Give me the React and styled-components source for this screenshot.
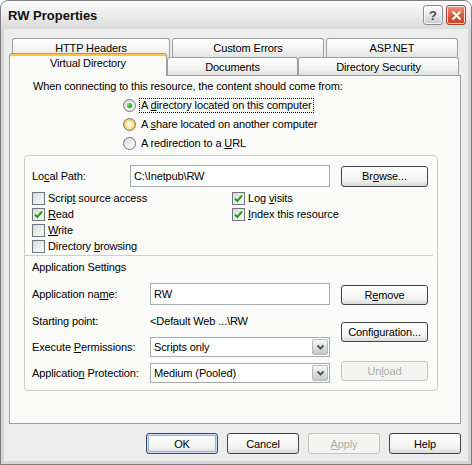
import React from 'react'
import styled, { createGlobalStyle, css } from 'styled-components'

const GlobalStyle = createGlobalStyle`
  html, body {
    margin: 0;
    padding: 0;
    background: #ffffff;
  }
  body {
    font-family: "Liberation Sans", Arial, sans-serif;
    font-size: 11px;
    letter-spacing: -0.12px;
    color: #000;
  }
  * { box-sizing: border-box; }
`

const Window = styled.div`
  width: 472px;
  height: 465px;
  border: 1px solid #7b7f84;
  border-radius: 8px 8px 0 0;
  background: #d6d6d6;
  display: flex;
  flex-direction: column;
  overflow: hidden;
`

const TitleBar = styled.div`
  height: 28px;
  flex-shrink: 0;
  display: flex;
  align-items: center;
  justify-content: space-between;
  padding: 0 5px 0 7px;
  background: linear-gradient(#fbfbfb, #eeeeee 45%, #dadada);
`

const Title = styled.div`
  font-family: "Liberation Sans", Arial, sans-serif;
  font-weight: bold;
  font-size: 13px;
  letter-spacing: 0;
  color: #111;
`

const CaptionButtons = styled.div`
  display: flex;
  gap: 3px;
`

const CaptionButton = styled.div`
  width: 20px;
  height: 20px;
  border-radius: 3px;
  display: flex;
  align-items: center;
  justify-content: center;
  border: 1px solid ${p => (p.$close ? '#a8452e' : '#8b8f96')};
  box-shadow: inset 0 0 0 1px rgba(255, 255, 255, 0.75);
  background: ${p =>
    p.$close
      ? 'linear-gradient(#ee9a84, #dc5a3c 50%, #c8401f)'
      : 'linear-gradient(#ffffff, #e4e4e6 55%, #c9cbd0)'};
  color: #4a4f57;
  font-weight: bold;
  font-size: 13px;
`

const Body = styled.div`
  flex: 1;
  margin: 0 3px 3px;
  background: #ededed;
  display: flex;
  flex-direction: column;
  padding: 9px 7px 7px 5px;
`

const TabStrip = styled.div`
  display: flex;
  flex-direction: column;
`

const TabRow = styled.div`
  display: flex;
  height: ${p => p.$h}px;
  gap: ${p => p.$gap}px;
  padding-left: ${p => p.$indent}px;
`

const Tab = styled.div`
  width: ${p => p.$w}px;
  border: 1px solid #9aa1a3;
  border-bottom: none;
  border-radius: 3px 3px 0 0;
  background: linear-gradient(#ffffff, #f4f4f3 55%, #e3e3e0);
  display: flex;
  align-items: center;
  justify-content: center;
  white-space: nowrap;
  ${p =>
    p.$active &&
    css`
      position: relative;
      z-index: 2;
      margin: -4px 0 -1px;
      border-top: 1px solid #e68b2c;
      box-shadow: inset 0 2px 0 #ffc83c;
      background: #fbfbf9;
      align-items: flex-start;
      padding-top: 3px;
    `}
`

const Panel = styled.div`
  flex: 1;
  border: 1px solid #9aa1a3;
  background: #fbfbf9;
  padding-top: 3px;
  display: flex;
  flex-direction: column;
`

const Intro = styled.div`
  padding-left: 23px;
  line-height: 14px;
`

const RadioList = styled.div`
  padding-left: 113px;
  margin-top: 3px;
  display: flex;
  flex-direction: column;
`

const RadioRow = styled.div`
  height: 19px;
  display: flex;
  align-items: center;
  gap: 2px;
`

const RadioCircle = styled.span`
  width: 13px;
  height: 13px;
  border-radius: 50%;
  border: 1px solid #6d7785;
  display: flex;
  align-items: center;
  justify-content: center;
  background: ${p =>
    p.$hover
      ? 'radial-gradient(circle, #fff6d4 25%, #fbd36a 60%, #f2b23a 100%)'
      : 'linear-gradient(135deg, #d8d8d2, #ffffff)'};
`

const RadioDot = styled.span`
  width: 5px;
  height: 5px;
  border-radius: 50%;
  background: radial-gradient(circle at 35% 35%, #7fe07f, #1d9a1d 70%);
`

const RadioLabel = styled.span`
  padding: 0 1px;
  line-height: 13px;
  border: 1px dotted ${p => (p.$focus ? '#000' : 'transparent')};
  margin-left: 1px;
`

const Group = styled.div`
  margin: 2px 0 0 14px;
  width: 414px;
  border: 1px solid #cfcfc8;
  border-radius: 4px;
  padding: 9px 8px 7px 7px;
  display: flex;
  flex-direction: column;
`

const PathRow = styled.div`
  display: flex;
  align-items: center;
`

const Label = styled.span`
  width: ${p => p.$w}px;
  flex-shrink: 0;
  white-space: nowrap;
`

const Field = styled.div`
  width: ${p => p.$w}px;
  height: ${p => p.$h}px;
  border: 1px solid #a4abb3;
  background: #ffffff;
  display: flex;
  align-items: center;
  padding-left: 3px;
  white-space: nowrap;
`

const DropButton = styled.span`
  margin-left: auto;
  margin-right: 1px;
  width: 16px;
  height: 16px;
  border: 1px solid #b8b8b8;
  border-radius: 2px;
  background: linear-gradient(#f8f8f8, #dcdcdc 60%, #c6c6c6);
  display: flex;
  align-items: center;
  justify-content: center;
`

const Button = styled.div`
  width: ${p => p.$w || 87}px;
  height: ${p => p.$h || 21}px;
  flex-shrink: 0;
  margin-left: ${p => p.$ml || 0}px;
  margin-top: ${p => p.$mt || 0}px;
  border: 1px solid ${p => (p.$disabled ? '#c4c4c0' : '#3b4652')};
  border-radius: 3px;
  background: ${p =>
    p.$disabled ? '#f4f4f2' : 'linear-gradient(#ffffff, #f3f3f1 70%, #d9d9d4)'};
  color: ${p => (p.$disabled ? '#adadaa' : '#000')};
  display: flex;
  align-items: center;
  justify-content: center;
  white-space: nowrap;
  ${p =>
    p.$default &&
    css`
      box-shadow: inset 0 0 0 1px #cfe4fb, inset 0 0 0 2px #8fb4e8;
    `}
`

const CheckGrid = styled.div`
  margin-top: 3px;
  display: grid;
  grid-template-columns: 200px 1fr;
  grid-auto-flow: column;
  grid-template-rows: repeat(4, 16px);
`

const CheckRow = styled.div`
  display: flex;
  align-items: center;
  gap: 3px;
  white-space: nowrap;
`

const CheckBox = styled.span`
  width: 13px;
  height: 13px;
  border: 1px solid #6d7785;
  background: linear-gradient(135deg, #d8d8d2, #ffffff);
  display: flex;
  align-items: center;
  justify-content: center;
`

const Separator = styled.div`
  margin: 1px -4px 0 -7px;
  height: 2px;
  border-top: 1px solid #cfcfc8;
  border-bottom: 1px solid #ffffff;
`

const SectionTitle = styled.div`
  margin-top: 3px;
  line-height: 14px;
`

const AppSection = styled.div`
  margin-top: 9px;
  display: flex;
`

const AppGrid = styled.div`
  display: grid;
  grid-template-columns: 118px 180px;
  grid-template-rows: 22px 20px 20px 20px;
  row-gap: 6px;
  align-items: center;
`

const ButtonColumn = styled.div`
  margin-left: 11px;
  display: flex;
  flex-direction: column;
`

const Footer = styled.div`
  display: flex;
  justify-content: flex-end;
  gap: 9px;
  padding-top: 9px;
`

const U = styled.span`
  text-decoration: underline;
`

const Check = () => (
  <svg width="9" height="9" viewBox="0 0 9 9">
    <polyline points="1,4.5 3.3,7 8,1.5" fill="none" stroke="#21a121" strokeWidth="2" />
  </svg>
)

const Chevron = () => (
  <svg width="9" height="7" viewBox="0 0 9 7">
    <polyline points="1.5,1.5 4.5,4.5 7.5,1.5" fill="none" stroke="#4d5a70" strokeWidth="2" />
  </svg>
)

function CheckItem({ checked, children }) {
  return (
    <CheckRow>
      <CheckBox>{checked && <Check />}</CheckBox>
      <span>{children}</span>
    </CheckRow>
  )
}

function Radio({ selected, hover, focus, children }) {
  return (
    <RadioRow>
      <RadioCircle $hover={hover}>{selected && <RadioDot />}</RadioCircle>
      <RadioLabel $focus={focus}>{children}</RadioLabel>
    </RadioRow>
  )
}

function Select({ value }) {
  return (
    <Field $w={180} $h={20}>
      <span>{value}</span>
      <DropButton>
        <Chevron />
      </DropButton>
    </Field>
  )
}

export default function App() {
  return (
    <>
      <GlobalStyle />
      <Window>
        <TitleBar>
          <Title>RW Properties</Title>
          <CaptionButtons>
            <CaptionButton>?</CaptionButton>
            <CaptionButton $close>
              <svg width="11" height="11" viewBox="0 0 11 11">
                <path d="M1.5 1.5 L9.5 9.5 M9.5 1.5 L1.5 9.5" stroke="#fff" strokeWidth="2" />
              </svg>
            </CaptionButton>
          </CaptionButtons>
        </TitleBar>

        <Body>
          <TabStrip>
            <TabRow $h={19} $gap={2} $indent={3}>
              <Tab $w={158}>HTTP Headers</Tab>
              <Tab $w={152}>Custom Errors</Tab>
              <Tab $w={132}>ASP.NET</Tab>
            </TabRow>
            <TabRow $h={18} $gap={0} $indent={0}>
              <Tab $w={158} $active>Virtual Directory</Tab>
              <Tab $w={131}>Documents</Tab>
              <Tab $w={161}>Directory Security</Tab>
            </TabRow>
          </TabStrip>

          <Panel>
            <Intro>When connecting to this resource, the content should come from:</Intro>
            <RadioList>
              <Radio selected focus>
                A <U>d</U>irectory located on this computer
              </Radio>
              <Radio hover>
                A <U>s</U>hare located on another computer
              </Radio>
              <Radio>
                A redirection to a <U>U</U>RL
              </Radio>
            </RadioList>

            <Group>
              <PathRow>
                <Label $w={98}>
                  Lo<U>c</U>al Path:
                </Label>
                <Field $w={200} $h={22}>C:\Inetpub\RW</Field>
                <Button $ml={11}>
                  Br<U>o</U>wse...
                </Button>
              </PathRow>

              <CheckGrid>
                <CheckItem>
                  Scrip<U>t</U> source access
                </CheckItem>
                <CheckItem checked>
                  <U>R</U>ead
                </CheckItem>
                <CheckItem>
                  <U>W</U>rite
                </CheckItem>
                <CheckItem>
                  Directory <U>b</U>rowsing
                </CheckItem>
                <CheckItem checked>
                  Log <U>v</U>isits
                </CheckItem>
                <CheckItem checked>
                  <U>I</U>ndex this resource
                </CheckItem>
              </CheckGrid>

              <Separator />
              <SectionTitle>Application Settings</SectionTitle>

              <AppSection>
                <AppGrid>
                  <Label>
                    Application na<U>m</U>e:
                  </Label>
                  <Field $w={180} $h={22}>RW</Field>
                  <Label>Starting point:</Label>
                  <span>&lt;Default Web ...\RW</span>
                  <Label>
                    Execute <U>P</U>ermissions:
                  </Label>
                  <Select value="Scripts only" />
                  <Label>
                    Applicatio<U>n</U> Protection:
                  </Label>
                  <Select value="Medium (Pooled)" />
                </AppGrid>
                <ButtonColumn>
                  <Button $mt={2} $h={20}>
                    R<U>e</U>move
                  </Button>
                  <Button $mt={17} $h={20}>
                    Confi<U>g</U>uration...
                  </Button>
                  <Button $mt={19} $h={20} $disabled>
                    Un<U>l</U>oad
                  </Button>
                </ButtonColumn>
              </AppSection>
            </Group>
          </Panel>

          <Footer>
            <Button $w={72} $default>OK</Button>
            <Button $w={72}>Cancel</Button>
            <Button $w={72} $disabled>
              <U>A</U>pply
            </Button>
            <Button $w={72}>Help</Button>
          </Footer>
        </Body>
      </Window>
    </>
  )
}
